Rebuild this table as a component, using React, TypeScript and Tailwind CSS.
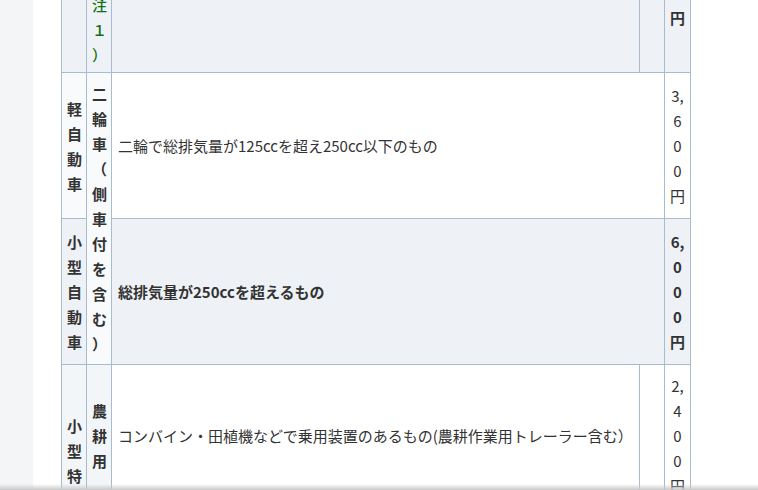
import React from "react";

const font = { fontFamily: '"Noto Sans CJK JP", "Noto Sans", sans-serif' };

const cellBase =
  "border border-[#a9bccb] text-center align-middle px-[5px] py-[8px] [line-break:anywhere] break-all";

export default function App() {
  return (
    <div
      className="h-[490px] w-[758px] overflow-hidden flex bg-white text-[#333] text-[15px] leading-[25px]"
      style={font}
    >
      <div className="w-[33px] shrink-0 bg-[#f3f5f7]" />
      <div className="flex-1 pl-[28px] overflow-hidden">
        <table className="table-fixed border-collapse w-[629px] mt-[-50px]">
          <colgroup>
            <col className="w-[25px]" />
            <col className="w-[25px]" />
            <col className="w-[528px]" />
            <col className="w-[25px]" />
            <col className="w-[26px]" />
          </colgroup>
          <tbody>
            <tr className="bg-[#eef2f6] h-[122px]">
              <th className={cellBase} />
              <th
                className={
                  "border border-[#a9bccb] text-center align-bottom px-[5px] pt-[8px] pb-[5px] [line-break:anywhere] break-all text-[#137013] font-medium"
                }
              >
                （注１）
              </th>
              <th className={cellBase} />
              <th className={cellBase} />
              <th
                className={
                  "border border-[#a9bccb] text-center align-top px-[5px] pt-[54px] [line-break:anywhere] break-all font-bold"
                }
              >
                円
              </th>
            </tr>
            <tr className="bg-white h-[146px]">
              <th className={cellBase + " font-bold bg-[#f8fafb]"}>軽自動車</th>
              <th rowSpan={2} className={cellBase + " font-bold bg-[#f8fafb]"}>
                二輪車（側車付を含む）
              </th>
              <td colSpan={2} className="border border-[#a9bccb] text-left align-middle px-[6px] py-[8px]">
                二輪で総排気量が125ccを超え250cc以下のもの
              </td>
              <td className={cellBase}>3,600円</td>
            </tr>
            <tr className="bg-[#eef2f6] h-[146px]">
              <th className={cellBase + " font-bold"}>小型自動車</th>
              <td colSpan={2} className="border border-[#a9bccb] text-left align-middle px-[6px] py-[8px] font-bold">
                総排気量が250ccを超えるもの
              </td>
              <td className={cellBase + " font-bold"}>6,000円</td>
            </tr>
            <tr className="bg-white h-[141px]">
              <th rowSpan={2} className={cellBase + " font-bold bg-[#f3f6f8] pb-[21px]"}>
                小型特殊自動車
              </th>
              <th className={cellBase + " font-bold bg-[#f3f6f8]"}>農耕用</th>
              <td className="border border-[#a9bccb] text-left align-middle px-[6px] py-[8px]">
                コンバイン・田植機などで乗用装置のあるもの(農耕作業用トレーラー含む）
              </td>
              <td className={cellBase} />
              <td className={cellBase}>2,400円</td>
            </tr>
            <tr className="bg-[#eef2f6] h-[141px]">
              <th className={cellBase + " font-bold"}>その他</th>
              <td className="border border-[#a9bccb] text-left align-middle px-[6px] py-[8px]">
                フォークリフトなど
              </td>
              <td className={cellBase} />
              <td className={cellBase}>5,900円</td>
            </tr>
          </tbody>
        </table>
      </div>
      <div className="fixed left-0 right-0 bottom-0 h-[6px] bg-gradient-to-b from-transparent to-[#c8c8c8] pointer-events-none" />
    </div>
  );
}
